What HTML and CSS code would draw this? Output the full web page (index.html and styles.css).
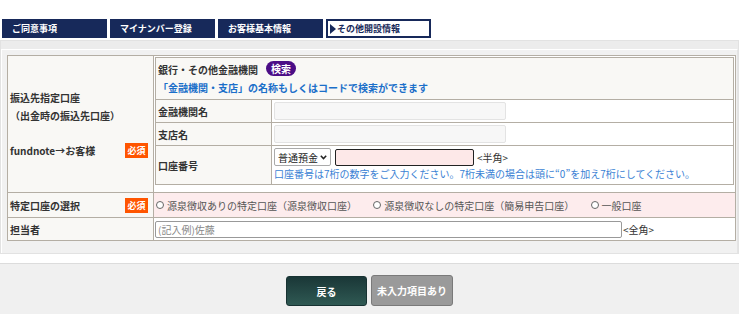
FILE: index.html
```html
<!DOCTYPE html>
<html lang="ja">
<head>
<meta charset="utf-8">
<title>その他開設情報</title>
<link rel="stylesheet" href="styles.css">
</head>
<body>
<div class="tabs">
  <div class="tab">ご同意事項</div>
  <div class="tab">マイナンバー登録</div>
  <div class="tab">お客様基本情報</div>
  <div class="tab tab-current"><svg class="tri" width="6" height="10" viewBox="0 0 6 10"><path d="M0 0 L6 5 L0 10 Z"/></svg>その他開設情報</div>
</div>

<div class="panel">
  <div class="panel-inner">
    <table class="form">
      <colgroup><col class="c-lbl"><col></colgroup>
      <tr class="r-bank">
        <th class="lbl">
          <div class="lbl-lines">
            <div>振込先指定口座</div>
            <div>（出金時の振込先口座）</div>
            <div class="lbl-row gap-top">fundnote→お客様<span class="req">必須</span></div>
          </div>
        </th>
        <td class="nest">
          <table class="bank">
            <colgroup><col class="c-sub"><col></colgroup>
            <tr class="r-hd">
              <th class="hd" colspan="2">
                <div>銀行・その他金融機関<span class="pill">検索</span></div>
                <div class="hint">「金融機関・支店」の名称もしくはコードで検索ができます</div>
              </th>
            </tr>
            <tr class="r-line">
              <th class="sub">金融機関名</th>
              <td><input class="in-ro" type="text" readonly></td>
            </tr>
            <tr class="r-line">
              <th class="sub">支店名</th>
              <td><input class="in-ro" type="text" readonly></td>
            </tr>
            <tr class="r-acc">
              <th class="sub">口座番号</th>
              <td>
                <div class="acc-line">
                  <span class="sel-wrap">
                    <select class="sel"><option>普通預金</option><option>当座預金</option></select>
                    <svg class="chev" width="7" height="5" viewBox="0 0 7 5"><path d="M0.8 0.8 L3.5 3.6 L6.2 0.8" fill="none" stroke="#222" stroke-width="1.5"/></svg>
                  </span>
                  <input class="in-acc" type="text">
                  <span class="note-w">&lt;半角&gt;</span>
                </div>
                <div class="acc-note">口座番号は7桁の数字をご入力ください。7桁未満の場合は頭に“0”を加え7桁にしてください。</div>
              </td>
            </tr>
          </table>
        </td>
      </tr>
      <tr class="r-tok">
        <th class="lbl"><div class="lbl-row">特定口座の選択<span class="req">必須</span></div></th>
        <td class="pink">
          <label class="opt"><input type="radio" name="tok">源泉徴収ありの特定口座（源泉徴収口座）</label>
          <label class="opt"><input type="radio" name="tok">源泉徴収なしの特定口座（簡易申告口座）</label>
          <label class="opt"><input type="radio" name="tok">一般口座</label>
        </td>
      </tr>
      <tr class="r-tan">
        <th class="lbl">担当者</th>
        <td class="tan"><input class="in-name" type="text" placeholder="(記入例)佐藤"><span class="note-w">&lt;全角&gt;</span></td>
      </tr>
    </table>
  </div>
</div>

<div class="actions">
  <button class="btn btn-back" type="button">戻る</button>
  <button class="btn btn-off" type="button">未入力項目あり</button>
</div>
</body>
</html>
```

FILE: styles.css
```css
* { box-sizing: border-box; }

body {
  margin: 0;
  font-family: "Noto Sans CJK JP", "Noto Sans", sans-serif;
  font-size: 10px;
  color: #333;
  background: #fff;
}

/* step tabs */
.tabs {
  display: flex;
  gap: 3px;
  padding: 19px 0 0 2px;
}
.tab {
  width: 105px;
  height: 19px;
  background: #17295a;
  color: #fff;
  font-weight: 700;
  font-size: 9px;
  line-height: 19px;
  padding-left: 10px;
  white-space: nowrap;
}
.tab-current {
  background: #fff;
  color: #17295a;
  border: 2px solid #17295a;
  display: flex;
  align-items: center;
  gap: 1px;
  padding-left: 2px;
  line-height: 15px;
}
.tri { fill: #17295a; }

/* main panel */
.panel {
  margin-top: 2px;
  background: #ececec;
  border: 1px solid #e2e2e2;
}
.panel-inner {
  margin-top: 8px;
  background: #f1f1f1;
  border-top: 1px solid #fff;
  border-left: 1px solid #fff;
  border-right: 1px solid #e4e4e4;
  padding: 5px 1px 12px 5px;
}

.form {
  width: 100%;
  border-collapse: collapse;
  background: #fff;
}
.c-lbl { width: 146px; }
.form > tbody > tr > th,
.form > tbody > tr > td {
  border: 1px solid #b4aea4;
}
.lbl {
  background: #f9f8f5;
  text-align: left;
  font-weight: 700;
  padding: 0 5px 0 2px;
  vertical-align: middle;
  white-space: nowrap;
}
.lbl-lines { line-height: 17.5px; }
.lbl-row {
  display: flex;
  justify-content: space-between;
  align-items: center;
}
.gap-top { margin-top: 17.5px; }
.req {
  display: inline-block;
  width: 23px;
  height: 15px;
  line-height: 15px;
  background: #ff5500;
  color: #fff;
  font-size: 9px;
  font-weight: 700;
  text-align: center;
}

.r-bank { height: 136px; }
.r-tok { height: 25px; }
.r-tan { height: 23px; }

.nest {
  padding: 1px 1px 7px 1px;
  vertical-align: top;
  background: #fff;
}
.bank {
  width: 100%;
  border-collapse: collapse;
}
.c-sub { width: 116px; }
.bank th,
.bank td {
  border: 1px solid #b4aea4;
}
.bank th {
  background: #f9f8f5;
  text-align: left;
  font-weight: 700;
  padding: 0 2px;
}
.bank td {
  background: #fff;
  padding: 0 2px;
}
.r-hd { height: 42px; }
.r-line { height: 23px; }
.r-acc { height: 39px; }
.hd { line-height: 18px; }
.pill {
  display: inline-block;
  margin-left: 8px;
  padding: 0 5px;
  height: 15px;
  line-height: 15px;
  border-radius: 8px;
  background: #4b0d86;
  color: #fff;
  font-weight: 700;
  vertical-align: 1px;
}
.hint { color: #1b6fc9; }

.in-ro {
  display: block;
  width: 232px;
  height: 18px;
  border: 1px solid #e3e3e3;
  border-radius: 2px;
  background: #f7f7f7;
}
.acc-line {
  display: flex;
  align-items: center;
  gap: 3px;
}
.sel-wrap {
  position: relative;
  display: inline-flex;
}
.sel {
  appearance: none;
  -webkit-appearance: none;
  height: 18px;
  width: 57px;
  font-family: inherit;
  font-size: 10px;
  color: #222;
  border: 1px solid #aaa;
  border-radius: 2px;
  background: #fff;
  padding: 0 0 0 3px;
}
.chev {
  position: absolute;
  right: 4px;
  top: 7px;
  pointer-events: none;
}
.in-acc {
  width: 139px;
  height: 17px;
  border: 1px solid #222;
  border-radius: 2px;
  background: #fde8e8;
  margin-left: 1px;
}
.note-w { color: #333; }
.acc-note {
  color: #3a7fd4;
  line-height: 16px;
}

.pink {
  background: #fdeced;
  padding: 0 2px;
  color: #555;
}
.opt {
  display: inline-flex;
  align-items: center;
  gap: 3px;
  margin-right: 14px;
}
.opt input {
  appearance: none;
  -webkit-appearance: none;
  width: 8px;
  height: 8px;
  margin: 0;
  border: 1px solid #666;
  border-radius: 50%;
  background: #fff;
}

.tan {
  padding: 0 1px;
  background: #fff;
}
.in-name {
  width: 467px;
  height: 17px;
  border: 1px solid #999;
  border-radius: 2px;
  padding: 0 2px;
  font-family: inherit;
  font-size: 10px;
  vertical-align: middle;
}
.in-name::placeholder { color: #888; }
.tan .note-w { vertical-align: middle; margin-left: 1px; }

/* action buttons */
.actions {
  margin-top: 9px;
  border-top: 1px solid #dcdcdc;
  background: #f0f0f0;
  padding-top: 12px;
  height: 60px;
  display: flex;
  justify-content: center;
  align-items: flex-start;
  gap: 4px;
}
.btn {
  font-family: inherit;
  font-size: 10px;
  font-weight: 700;
  color: #fff;
  border-radius: 3px;
  padding: 0;
  white-space: nowrap;
}
.btn-back {
  width: 81px;
  height: 30px;
  background: linear-gradient(#1a3737, #2f5953);
  border: 1px solid #173232;
}
.btn-off {
  width: 82px;
  height: 31px;
  margin-top: -1px;
  background: #9a9a9a;
  border: 1px solid #7a7a7a;
}
```
